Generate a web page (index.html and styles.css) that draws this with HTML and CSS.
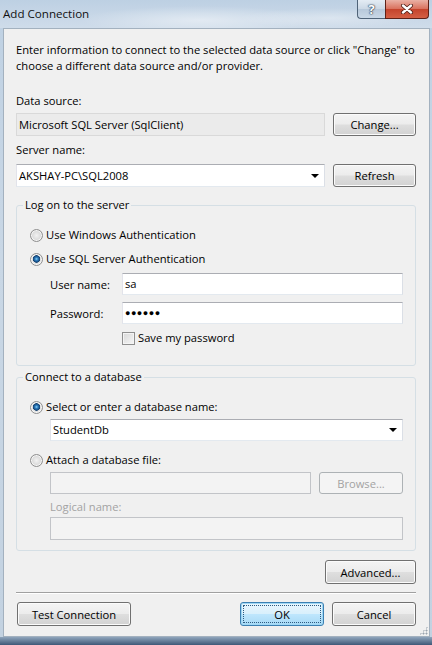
FILE: index.html
```html
<!DOCTYPE html>
<html lang="en">
<head>
    <meta charset="UTF-8">
    <meta name="viewport" content="width=device-width, initial-scale=1.0">
    <title>Add Connection</title>
    <link rel="stylesheet" href="styles.css">
</head>
<body>
    <div class="window">
        <!-- Title bar -->
        <div class="titlebar">
            <span class="title">Add Connection</span>
            <div class="caption-buttons">
                <span class="cap-btn help">?</span>
                <span class="cap-btn close">
                    <svg width="14" height="10" viewBox="0 0 14 10">
                        <path d="M3 1.5 L11 8.5 M11 1.5 L3 8.5" stroke="#4a1a12" stroke-width="4" stroke-linecap="round"/>
                        <path d="M3 1.5 L11 8.5 M11 1.5 L3 8.5" stroke="#fff" stroke-width="2.4" stroke-linecap="round"/>
                    </svg>
                </span>
            </div>
        </div>

        <div class="client">
            <p class="intro">Enter information to connect to the selected data source or click "Change" to<br>choose a different data source and/or provider.</p>

            <div class="label first">Data source:</div>
            <div class="row">
                <div class="field readonly">Microsoft SQL Server (SqlClient)</div>
                <button class="btn side">Change...</button>
            </div>

            <div class="label">Server name:</div>
            <div class="row">
                <div class="field combo">AKSHAY-PC\SQL2008<span class="arrow"></span></div>
                <button class="btn side">Refresh</button>
            </div>

            <!-- Log on group -->
            <fieldset class="group">
                <legend>Log on to the server</legend>
                <div class="option"><span class="radio"></span>Use Windows Authentication</div>
                <div class="option second"><span class="radio checked"></span>Use SQL Server Authentication</div>
                <div class="cred-row">
                    <span class="cred-label">User name:</span>
                    <div class="field">sa</div>
                </div>
                <div class="cred-row">
                    <span class="cred-label">Password:</span>
                    <div class="field password">&#9679;&#9679;&#9679;&#9679;&#9679;&#9679;</div>
                </div>
                <div class="save"><span class="checkbox"></span>Save my password</div>
            </fieldset>

            <!-- Database group -->
            <fieldset class="group db">
                <legend>Connect to a database</legend>
                <div class="option"><span class="radio checked"></span>Select or enter a database name:</div>
                <div class="field combo indent db-name">StudentDb<span class="arrow"></span></div>
                <div class="option attach"><span class="radio"></span>Attach a database file:</div>
                <div class="attach-row indent">
                    <div class="field disabled"></div>
                    <button class="btn browse" disabled>Browse...</button>
                </div>
                <div class="logical indent">Logical name:</div>
                <div class="field disabled indent logical-field"></div>
            </fieldset>

            <div class="advanced-row">
                <button class="btn advanced">Advanced...</button>
            </div>

            <div class="separator"></div>

            <div class="footer">
                <button class="btn test">Test Connection</button>
                <button class="btn ok">OK</button>
                <button class="btn cancel">Cancel</button>
            </div>

            <span class="grip"></span>
        </div>
        <div class="frame-bottom"></div>
    </div>
</body>
</html>
```

FILE: styles.css
```css
/* Dialog window */
body {
    margin: 0;
    font-family: "Open Sans", Arial, sans-serif;
    font-size: 11.2px;
    color: #000;
    background: #c6d5e4;
}
.window {
    width: 432px;
    height: 645px;
    display: flex;
    flex-direction: column;
    background: linear-gradient(to bottom, #bfd1e3, #c9d7e5 40%, #c3d2e1);
}

/* Title bar */
.titlebar {
    height: 28px;
    display: flex;
    justify-content: space-between;
    align-items: flex-start;
    background:
        radial-gradient(ellipse 120px 14px at 200px 20px, rgba(255, 255, 255, 0.45), rgba(255, 255, 255, 0)),
        radial-gradient(ellipse 90px 10px at 330px 18px, rgba(255, 255, 255, 0.35), rgba(255, 255, 255, 0)),
        linear-gradient(to bottom, #bdd0e3, #cfdcea);
}
.title {
    font-size: 11.6px;
    line-height: 16px;
    margin: 6px 0 0 3px;
    color: #111;
}
.caption-buttons {
    display: flex;
    margin-right: 3px;
}
.cap-btn {
    height: 19px;
    box-sizing: border-box;
    display: flex;
    align-items: center;
    justify-content: center;
    border: 1px solid #4f6378;
    border-top: none;
}
.help {
    width: 28px;
    border-radius: 0 0 0 4px;
    border-right: none;
    background: linear-gradient(to bottom, #e4ecf4, #cbd8e5 50%, #b7c8da 51%, #c9d8e7);
    color: #fff;
    font-size: 13px;
    font-weight: bold;
    text-shadow: 0 0 1px #2c3e52, 0 0 1px #2c3e52, 0 0 2px #2c3e52;
}
.close {
    width: 44px;
    border-radius: 0 0 4px 0;
    border-color: #5e2117;
    background: linear-gradient(to bottom, #eab1a5, #d9705c 50%, #c4432c 51%, #d45f44);
}

/* Client area */
.client {
    position: relative;
    flex: 1;
    margin: 0 2px 0 3px;
    border: 1px solid #a3b1bf;
    background: #f0f0f0;
    padding: 13px 13px 10px 12px;
}
.intro {
    margin: 0;
    line-height: 16px;
    white-space: nowrap;
}
.label {
    line-height: 16px;
    margin-top: 6px;
}
.label.first {
    margin-top: 19px;
}
.row {
    display: flex;
    gap: 8px;
    margin-top: 6px;
}
.label.first + .row {
    margin-top: 4px;
}

/* Text boxes and combos */
.field {
    position: relative;
    flex: 1;
    height: 22px;
    box-sizing: border-box;
    border: 1px solid;
    border-color: #abadb3 #dbdfe6 #e3e9ef #e2e3ea;
    background: #fff;
    padding-left: 2px;
    line-height: 20px;
    white-space: nowrap;
}
.row .field {
    height: 23px;
    line-height: 21px;
}
.field.readonly {
    background: #ebebeb;
    border-color: #d9d9d9;
}
.field.disabled {
    background: #f3f3f3;
    border-color: #c2c4c8;
}
.field.password {
    font-size: 9px;
    letter-spacing: 0.5px;
}
.arrow {
    position: absolute;
    right: 5px;
    top: 50%;
    margin-top: -2px;
    border-left: 4px solid transparent;
    border-right: 4px solid transparent;
    border-top: 4px solid #000;
}

/* Buttons */
.btn {
    height: 23px;
    box-sizing: border-box;
    border: 1px solid #707070;
    border-radius: 3px;
    background: linear-gradient(to bottom, #f4f4f4, #ececec 48%, #dedede 52%, #d2d2d2);
    box-shadow: inset 0 0 0 1px #fbfbfb;
    font-family: inherit;
    font-size: 11.2px;
    color: #000;
    padding: 0;
}
.btn.side {
    width: 83px;
}
.btn:disabled {
    color: #a3a3a3;
    border-color: #adb2b5;
    background: #f4f4f4;
    box-shadow: none;
}

/* Group boxes */
.group {
    margin: 10px 0 0 0;
    border: 1px solid #d5dfe5;
    border-radius: 3px;
    padding: 14px 12px 19px 13px;
}
.group.db {
    margin-top: 3px;
    padding-bottom: 10px;
}
.group legend {
    padding: 0 2px;
    margin-left: -7px;
    line-height: 16px;
}
.option {
    display: flex;
    align-items: center;
    line-height: 16px;
}
.option.second {
    margin-top: 8px;
}
.option.attach {
    margin-top: 11px;
}
.radio {
    width: 13px;
    height: 13px;
    box-sizing: border-box;
    margin-right: 3px;
    border-radius: 50%;
    border: 1px solid #8f8f8f;
    background: radial-gradient(circle, #f2f2f2 0, #e2e2e2 3px, #cfcfcf 6px);
    box-shadow: inset 0 0 0 1px #f6f6f6;
}
.radio.checked {
    background: radial-gradient(circle at 50% 45%, #8fd8f7 0, #2c7cc0 1.5px, #123f6e 3.5px, #dcdcdc 4px, #e6e6e6 6px);
}
.indent {
    margin-left: 20px;
}
.cred-row {
    display: flex;
    align-items: center;
    margin: 6px 0 0 20px;
}
.cred-row + .cred-row {
    margin-top: 7px;
}
.cred-label {
    width: 72px;
}
.save {
    display: flex;
    align-items: center;
    line-height: 16px;
    margin: 6px 0 0 92px;
}
.checkbox {
    width: 13px;
    height: 13px;
    box-sizing: border-box;
    margin-right: 3px;
    border: 1px solid #8f8f8f;
    background: linear-gradient(135deg, #d8d8d8, #f6f6f6);
    box-shadow: inset 0 0 0 1px #f4f4f4;
}
.db-name {
    margin-top: 4px;
}
.attach-row {
    display: flex;
    gap: 8px;
    margin-top: 4px;
}
.browse {
    width: 84px;
    height: 22px;
}
.logical {
    color: #a3a3a3;
    line-height: 16px;
    margin-top: 5px;
}
.logical-field {
    height: 23px;
    margin-top: 2px;
}

/* Bottom buttons */
.advanced-row {
    display: flex;
    justify-content: flex-end;
    margin-top: 9px;
}
.btn.advanced {
    width: 91px;
    height: 24px;
}
.separator {
    margin-top: 8px;
    border-top: 1px solid #a0a0a0;
    border-bottom: 1px solid #fff;
}
.footer {
    display: flex;
    margin-top: 8px;
}
.footer .btn {
    height: 24px;
}
.btn.test {
    width: 114px;
    margin-left: 1px;
}
.btn.ok {
    width: 84px;
    margin-left: auto;
    border-color: #3c7fb1;
    background: linear-gradient(to bottom, #eaf6fd, #d9f0fc 48%, #bee6fd 52%, #a7d9f5);
    box-shadow: inset 0 0 0 1px #9fd8f6;
    outline: 1px dotted #2c5a80;
    outline-offset: -4px;
}
.btn.cancel {
    width: 84px;
    margin-left: 8px;
}
.grip {
    position: absolute;
    right: 1px;
    bottom: 1px;
    width: 9px;
    height: 9px;
    background: radial-gradient(circle, #9aa4ae 0.8px, transparent 1.2px) 0 0 / 3px 3px;
    clip-path: polygon(100% 0, 100% 100%, 0 100%);
}

.frame-bottom {
    height: 8px;
    background: linear-gradient(to bottom, #8fa5bc, #3f5877);
}
```
